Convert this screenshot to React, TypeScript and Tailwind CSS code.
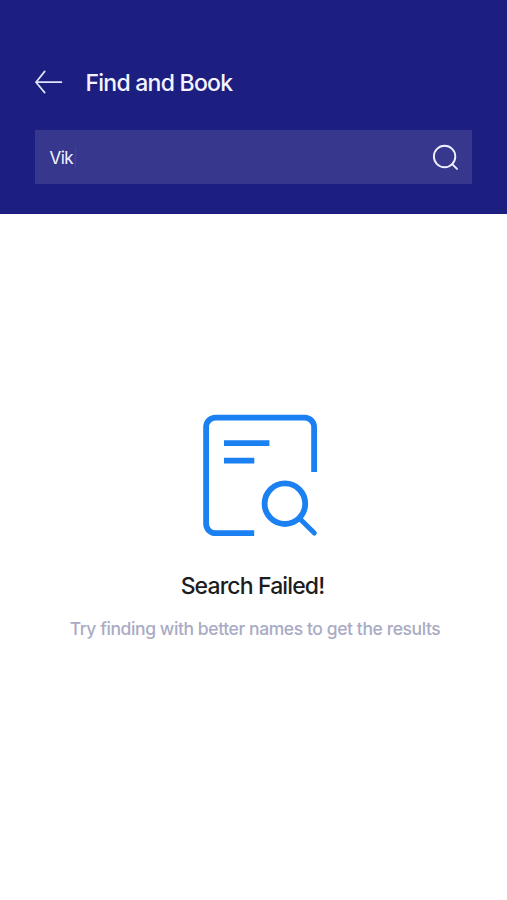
function BackArrow() {
  return (
    <svg className="h-7 w-8" viewBox="0 0 32 28" fill="none" stroke="currentColor" strokeWidth="1.7" strokeLinecap="round" strokeLinejoin="round">
      <path d="M28.4 14.2H3M11.7 3.4L3 14.2l8.7 10.4" />
    </svg>
  );
}

function SearchIcon() {
  return (
    <svg className="h-8 w-8" viewBox="0 0 32 32" fill="none" stroke="currentColor" strokeWidth="1.9" strokeLinecap="round">
      <circle cx="15.6" cy="15.5" r="10.7" />
      <path d="M23.2 23.1l4.8 4.8" />
    </svg>
  );
}

function EmptyResultIcon() {
  return (
    <svg className="h-32 w-[120px] text-[#1b80f2]" viewBox="0 0 120 128" fill="none" stroke="currentColor" strokeWidth="5.8">
      <path d="M54.2 121.2H15.5a9.4 9.4 0 0 1-9.4-9.4V15a9.4 9.4 0 0 1 9.4-9.4h89.2a9.4 9.4 0 0 1 9.4 9.4v45" />
      <path d="M24 31.1h45.4M24 48.7h30.3" />
      <circle cx="84.9" cy="91.7" r="20.3" />
      <path d="M99.6 106.5l14.7 14.5" strokeWidth="5" strokeLinecap="round" />
    </svg>
  );
}

export default function App() {
  return (
    <div className="flex h-[900px] w-full flex-col bg-white font-['Inter',sans-serif]">
      <header className="h-[213.5px] shrink-0 bg-[#1d1f80] pl-[34.5px] pr-[35px] pt-[68px] text-[#f3f4ff]">
        <div className="flex h-7 items-center">
          <button aria-label="Back" className="-ml-[2px] text-[#dfe4ff]">
            <BackArrow />
          </button>
          <h1 className="ml-[21px] mt-[2px] whitespace-nowrap text-[23px] font-medium leading-7 tracking-[-0.75px]">Find and Book</h1>
        </div>
        <div className="mt-[34px] flex h-[54px] items-center justify-between bg-[#36378d] pl-[15px] pr-[11px]">
          <div className="mt-px flex items-center gap-[2px]">
            <span className="mt-px text-[17px] leading-6 tracking-[-0.6px]">Vik</span>
            <span className="h-5 w-px bg-[#364aa0]" />
          </div>
          <button aria-label="Search" className="text-[#eef1ff]">
            <SearchIcon />
          </button>
        </div>
      </header>
      <main className="flex flex-1 flex-col items-center pt-[198.5px]">
        <div className="mr-[-13px]">
          <EmptyResultIcon />
        </div>
        <h2 className="mr-[2px] mt-[31px] whitespace-nowrap text-[23px] font-medium leading-[30px] tracking-[-0.86px] text-[#1c1c1e]">Search Failed!</h2>
        <p className="ml-[3px] mt-4 whitespace-nowrap text-[17.5px] font-medium leading-6 tracking-[-0.41px] text-[#a9abc4]">Try finding with better names to get the results</p>
      </main>
    </div>
  );
}
